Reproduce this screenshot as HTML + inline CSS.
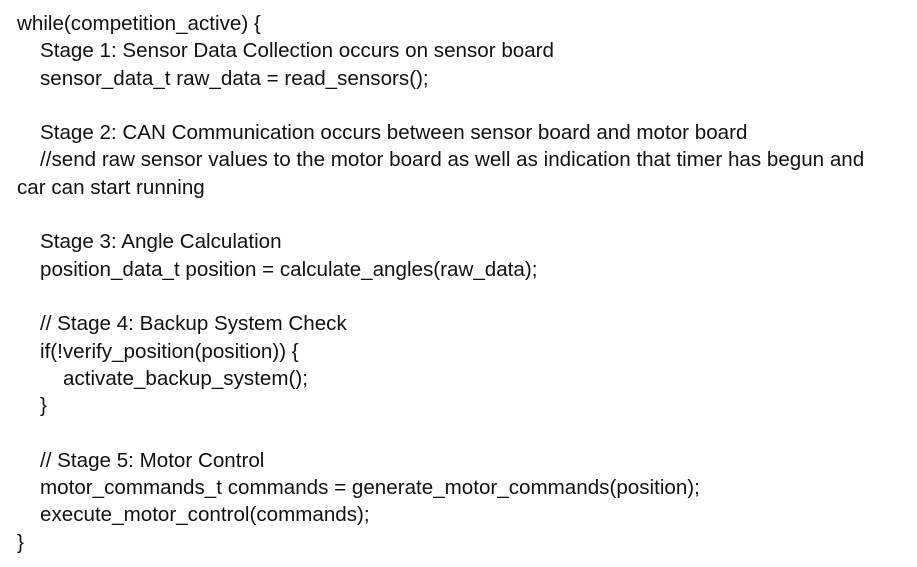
<!DOCTYPE html>
<html><head><meta charset="utf-8"><style>
html,body{margin:0;padding:0;background:#fff;width:917px;height:567px;overflow:hidden}
.c{position:absolute;left:0;top:10px;font-family:"Liberation Sans",Arial,sans-serif;font-size:20.6px;line-height:27.3px;color:#111}
.l{height:27.3px;white-space:pre}
.a{padding-left:17px}.b{padding-left:40px}.d{padding-left:63px}
</style></head><body><div class="c"><div class="l a">while(competition_active) {</div><div class="l b">Stage 1: Sensor Data Collection occurs on sensor board</div><div class="l b">sensor_data_t raw_data = read_sensors();</div><div class="l"></div><div class="l b">Stage 2: CAN Communication occurs between sensor board and motor board</div><div class="l b">//send raw sensor values to the motor board as well as indication that timer has begun and</div><div class="l a">car can start running</div><div class="l"></div><div class="l b">Stage 3: Angle Calculation</div><div class="l b">position_data_t position = calculate_angles(raw_data);</div><div class="l"></div><div class="l b">// Stage 4: Backup System Check</div><div class="l b">if(!verify_position(position)) {</div><div class="l d">activate_backup_system();</div><div class="l b">}</div><div class="l"></div><div class="l b">// Stage 5: Motor Control</div><div class="l b">motor_commands_t commands = generate_motor_commands(position);</div><div class="l b">execute_motor_control(commands);</div><div class="l a">}</div></div></body></html>
